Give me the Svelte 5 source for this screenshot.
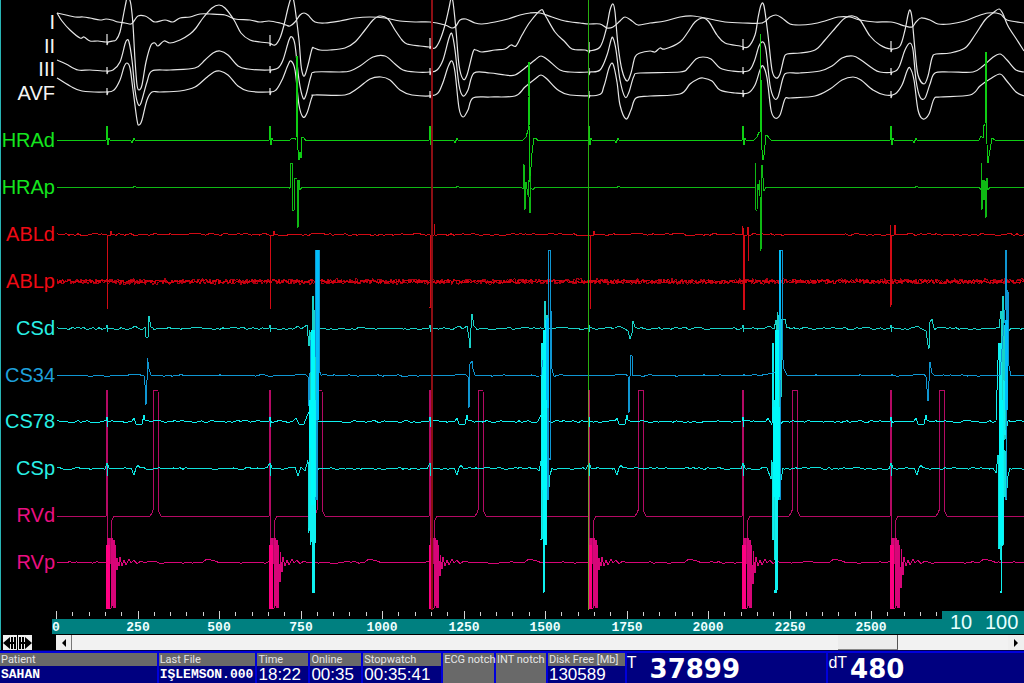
<script>
  let position = $state(766);

  const stims = [107, 270, 430, 589, 743, 891];
  const right = 1024;

  const labels = [
    { name: 'I', y: 29, color: '#f4f4f4' },
    { name: 'II', y: 53, color: '#f4f4f4' },
    { name: 'III', y: 76, color: '#f4f4f4' },
    { name: 'AVF', y: 100, color: '#f4f4f4' },
    { name: 'HRAd', y: 147, color: '#14e61e' },
    { name: 'HRAp', y: 194, color: '#14e61e' },
    { name: 'ABLd', y: 241, color: '#f00a14' },
    { name: 'ABLp', y: 288, color: '#f00a14' },
    { name: 'CSd', y: 335, color: '#28f0e6' },
    { name: 'CS34', y: 382, color: '#1ea0dc' },
    { name: 'CS78', y: 428, color: '#28f0e6' },
    { name: 'CSp', y: 475, color: '#28f0e6' },
    { name: 'RVd', y: 522, color: '#eb0f82' },
    { name: 'RVp', y: 569, color: '#eb0f82' }
  ];

  // surface leads
  const leads = [
    '57,13 66,15 75,17 83,17 90,18 100,20 106,19 112,20 118,22 125,23 131,24 134,21 138,16 145,16 150,19 155,22 165,20 173,22 180,18 190,17 200,14 210,14 225,15 235,19 250,20 260,22 269,21 280,23 286,25 290,26 295,22 300,15 304,13 308,15 315,22 325,23 340,21 355,18 370,17 385,18 400,21 415,22 430,22 445,25 452,28 456,26 460,20 466,19 475,23 482,24 495,22 508,19 520,15 530,13 540,13 552,17 565,21 580,23 589,24 600,24 607,28 613,27 620,21 625,17 632,21 638,25 650,23 665,21 680,17 693,16 710,19 725,22 743,23 762,23 770,17 776,15 782,18 790,24 800,25 812,24 825,21 838,17 850,17 860,20 875,22 891,22 905,26 912,27 916,22 921,18 930,20 938,24 950,24 965,21 975,17 988,13 1000,14 1007,20 1024,23',
    '57,13 62,21 70,30 80,38 84,37 90,41 98,41 106,42 113,41 116,40 120,32 124,12 126,2 127,-2 129,-2 131,5 133,25 135,60 137,85 139,90 142,85 146,62 151,45 155,43 158,46 164,41 170,43 180,40 190,34 196,28 203,18 212,8 219,5 225,8 234,20 241,33 250,40 260,42 269,43 275,45 280,38 284,25 288,8 291,-2 293,-2 295,8 299,40 301,65 303,75 305,75 308,65 312,49 314,48 320,50 330,50 345,48 355,42 365,30 373,20 380,16 388,19 395,30 402,40 407,44 420,46 429,47 435,48 440,40 445,25 449,8 451,-1 453,2 456,30 459,65 463,79 467,75 473,52 476,50 482,52 495,50 505,49 511,45 516,46 522,35 530,22 541,10 545,15 555,32 565,42 572,49 585,50 589,51 600,47 606,30 610,10 613,4 615,12 618,45 622,70 627,81 631,73 635,57 640,53 650,51 655,52 660,48 665,49 680,42 688,32 695,22 703,18 709,22 717,35 725,43 740,46 748,47 755,35 758,18 761,5 764,6 768,35 772,70 776,78 780,74 784,58 787,54 800,53 815,50 825,40 838,25 845,18 853,16 860,20 870,36 880,45 891,49 900,46 905,30 908,15 910,10 912,18 915,50 918,75 924,84 928,76 932,58 936,54 950,53 965,48 975,35 985,20 993,13 999,9 1003,14 1008,26 1017,40 1024,51',
    '57,60 66,64 78,70 90,70 106,71 113,70 120,62 125,44 127,40 129,42 132,60 135,90 138,104 141,103 147,82 152,71 170,70 195,68 205,60 213,53 220,51 228,55 238,66 248,69 269,70 278,68 283,60 289,40 292,37 295,45 299,80 303,98 306,95 311,76 315,72 340,72 350,71 360,66 373,57 385,56 395,64 403,70 415,72 430,72 437,70 443,60 449,38 452,34 455,50 459,85 463,96 468,90 474,73 490,73 505,75 515,75 525,68 535,60 541,56 548,60 560,70 570,72 589,72 600,70 607,55 611,40 613,38 616,50 620,80 625,97 629,92 634,76 640,73 680,72 688,68 696,59 703,57 711,59 720,68 732,71 748,71 754,62 759,46 763,42 766,50 770,85 774,98 778,97 783,78 787,73 800,73 820,71 832,66 842,58 853,56 861,60 872,68 880,72 893,72 899,67 905,50 910,43 913,50 916,80 920,97 925,98 930,84 935,73 950,72 973,72 983,66 992,58 1000,54 1007,60 1016,70 1024,72',
    '57,78 70,86 82,91 106,92 114,90 120,80 124,67 127,63 130,68 133,90 137,120 139,125 142,120 147,100 152,92 160,92 180,91 195,87 206,78 214,72 220,71 228,75 238,86 248,91 269,92 276,90 282,80 288,65 291,61 295,70 299,105 303,117 307,113 312,97 315,95 345,95 358,88 370,79 381,77 390,80 400,90 412,95 435,95 442,85 448,67 452,61 455,72 459,108 463,117 468,110 473,98 490,97 515,96 525,87 535,79 541,75 547,79 558,90 570,95 598,95 604,86 609,68 613,64 617,82 620,105 626,119 631,110 636,98 650,96 680,94 690,84 698,79 703,78 712,81 720,90 735,93 748,93 755,85 760,70 763,66 767,78 771,110 775,118 780,115 785,99 790,98 815,96 830,89 842,80 853,77 861,80 873,90 885,95 895,94 902,85 907,71 910,68 914,80 918,110 923,119 929,114 934,99 940,97 970,95 980,86 990,79 1000,74 1006,80 1016,92 1024,96'
  ];

  // pacing artefact on leads II, III and AVF
  const leadSpikes = [
    [42, 43, 46, 50, 47, 49],
    [71, 70, 72, 72, 71, 72],
    [92, 92, 95, 95, 94, 95]
  ];

  function parse(text) {
    return text.trim().split(/\s+/).map((p) => p.split(',').map(Number));
  }

  // Catmull-Rom through the points
  function smooth(text) {
    const p = parse(text);
    let d = `M${p[0]}`;
    for (let i = 0; i < p.length - 1; i++) {
      const a = p[i - 1] || p[i];
      const b = p[i];
      const c = p[i + 1];
      const e = p[i + 2] || c;
      d += `C${b[0] + (c[0] - a[0]) / 6},${b[1] + (c[1] - a[1]) / 6} ${c[0] - (e[0] - b[0]) / 6},${c[1] - (e[1] - b[1]) / 6} ${c}`;
    }
    return d;
  }

  function rng(seed) {
    return () => {
      seed = (seed * 16807) % 2147483647;
      return seed / 2147483647;
    };
  }

  // baseline with noise, interrupted by the runs of fixed points
  function trace(base, amp, step, runs, seed = 7) {
    const rand = rng(seed * 997);
    const sorted = runs.map(parse).sort((a, b) => a[0][0] - b[0][0]);
    const pts = [];
    let x = 57;
    const fill = (to) => {
      while (x < to) {
        pts.push([x, base + (rand() - 0.5) * 2 * amp]);
        x += step;
      }
    };
    for (const run of sorted) {
      fill(run[0][0]);
      pts.push(...run);
      x = run[run.length - 1][0] + 1;
    }
    fill(right + step);
    return 'M' + pts.map((p) => p.join(',')).join('L');
  }

  const shift = (text, dx, dy = 0) =>
    parse(text).map(([x, y]) => `${x + dx},${y + dy}`).join(' ');

  const at = (text, xs, dy = 0) => xs.map((x) => shift(text, x, dy));

  const hrad = trace(140.5, 0.3, 6, [
    ...at('-1,0 0,-14 0,4 1,5 2,-2 3,0', stims, 140),
    ...at('-4,0 -2,1 -1,3 1,-2 2,0', [133, 456, 617, 915], 140),
    '290,140 292,138 295,139 296,139 297,56 297,140 298,150 299,160 300,152 301,158 302,137 304,138 306,141',
    '523,140 526,137 528,130 528,97 529,62 529,125 530,182 532,153 534,138 536,138 538,141',
    '754,140 757,137 759,132 760,132 760,34 761,80 761,140 763,160 764,155 766,135 767,135 769,138 771,140',
    '979,140 981,136 983,138 984,125 985,125 986,52 986,125 988,163 990,150 992,138 995,140'
  ], 3);

  const hrap = trace(187.5, 0.3, 6, [
    ...at('-2,0 0,1 1,-1 3,0', [133, 456, 617, 915], 187),
    '289,187 290,189 291,163 292,163 292,210 294,210 294,178 297,179 298,228 299,180 300,190 302,187',
    '521,187 523,189 523,164 524,164 525,210 526,182 528,195 528,180 530,213 530,176 531,188 533,190 535,187',
    '753,187 755,188 755,163 756,210 757,210 758,184 759,190 759,180 760,196 761,251 762,165 764,191 766,187',
    '979,187 981,190 981,163 982,210 983,180 984,200 985,180 986,218 987,178 988,190 990,187'
  ], 5);

  const abld = trace(234.5, 1, 3, [
    ...at('0,0 0,74 0,0 3,1 4,-4 5,0', [107, 270, 590], 235),
    '430,235 430,308 431,235 434,235 434,224 435,235',
    '742,235 743,226 744,310 744,235 747,235 748,227 748,261 749,235',
    '890,235 890,225 891,307 892,235 894,235 895,225 896,235'
  ], 11);

  const ablp = trace(281.5, 3, 1, [], 13);
  const ablpCore = trace(281.5, 2, 1, [], 41);

  const blip = '-1,0 0,-3 0,4 1,0';
  const csd = trace(328.5, 1, 3, [
    ...at(blip, stims, 328),
    '132,328 135,326 138,328 142,330 145,327 146,337 148,338 149,316 151,327 153,328',
    '295,328 298,326 301,329 307,325 309,346 310,330 312,480 313,296 314,545 315,310 316,500 318,328',
    '455,328 459,326 463,329 467,326 469,338 470,348 471,328 472,314 474,326 476,328',
    '541,328 544,329 545,301 546,445 547,315 548,460 549,328',
    '615,328 619,326 625,329 628,331 630,339 632,333 633,321 635,327 637,328',
    '765,328 769,326 774,329 776,320 777,470 777,312 778,490 779,315 780,480 782,319 785,319 787,328',
    '913,328 917,326 922,329 926,331 928,345 929,349 930,322 932,319 934,328',
    '999,328 1001,311 1001,549 1003,296 1003,545 1004,325 1005,440 1007,320 1009,331 1011,328'
  ], 17);

  const cs34 = trace(375.5, 0.7, 4, [
    '131,375 137,374 144,376 145,385 146,405 147,380 147,358 148,362 149,369 151,375',
    '295,375 305,374 308,377 309,406 311,340 314,470 316,250 316,500 317,250 317,500 318,250 319,250 319,370 321,375',
    '455,375 465,374 468,377 469,408 470,364 472,361 473,369 475,375',
    '541,375 547,330 548,500 548,250 550,250 550,460 551,310 552,369 554,376',
    '615,375 625,374 628,376 629,413 630,376 631,355 632,356 633,376 635,375',
    '765,375 775,372 778,500 780,250 780,500 781,250 782,250 782,350 784,369 787,375',
    '913,375 924,374 926,377 928,401 930,362 932,373 934,375',
    '1000,375 1005,310 1005,250 1007,250 1006,500 1008,290 1009,366 1011,376'
  ], 19);

  const cs78 = trace(421.5, 1, 3, [
    ...at('-1,0 0,-4 0,6 1,0', stims, 421),
    ...at('0,0 2,-3 4,3 6,4 10,3 12,-6 13,-1 15,0', [132, 455, 615, 914], 421),
    '293,421 296,418 299,424 304,424 307,416 309,412 309,530 310,400 311,545 312,331 312,577 313,593 313,400 314,593 314,340 315,545 316,400 317,421',
    '538,421 541,415 541,343 541,540 543,343 543,592 544,592 544,370 545,546 546,320 546,545 548,421',
    '766,421 768,418 772,425 773,343 773,540 775,400 775,593 776,330 777,593 778,360 778,500 780,426 783,421',
    '996,421 998,360 999,343 999,549 1001,343 1001,593 1002,400 1003,546 1004,380 1005,435 1008,421'
  ], 23);

  const csp = trace(468.5, 1, 3, [
    ...at('0,-5 0,8 1,-3 2,0', stims, 468),
    ...at('0,0 3,7 5,0 7,-3 9,0', [131, 454, 614, 914], 468),
    '290,467 295,467 298,476 301,467 305,471 308,460 309,533 310,440 311,540 312,440 313,540 314,430 315,520 316,440 317,500 318,470',
    '536,468 539,471 541,461 542,540 543,440 544,560 545,440 546,545 547,420 548,500 550,475 552,468',
    '762,467 767,468 771,479 772,460 773,540 774,440 775,560 776,430 777,502 778,440 780,498 781,480 783,468',
    '993,468 996,473 998,455 999,548 1000,440 1001,560 1002,440 1003,545 1005,450 1006,500 1008,476 1010,468'
  ], 29);

  const pulses = [154, 318, 479, 639, 793, 940];
  const rvd = trace(516.5, 0.3, 10, [
    ...at('-1,516 -1,390 0,390 0,609 3,565 4,538 5,520 7,516', stims),
    ...at('-4,516 -1,512 0,390 4,390 5,512 7,516 9,517', pulses)
  ], 31);

  // height of the ringing after each stimulus
  const rings = [8, 20, 14, 8, 22, 26];
  const rvp = trace(562.5, 0.8, 4, [
    ...stims.map((x, i) =>
      shift(
        `0,562 0,538 0,608 1,538 1,608 2,538 2,608 4,608 4,538 5,608 6,538 7,608 7,540 8,608 8,545 10,${562 + rings[i]} 10,${562 - rings[i] / 2} 12,${562 + rings[i] / 2} 13,557 15,566 17,560 19,565 22,559 24,563 27,560 30,564 34,561 36,562`,
        x
      )
    ),
    ...at('0,562 4,559 8,560 12,561 17,563', [203, 365, 525, 685, 830, 980])
  ], 37);

  const channels = [
    { d: ablp, color: '#aa0010' },
    { d: ablpCore, color: '#d2000f' },
    { d: abld, color: '#d20a14' },
    { d: rvd, color: '#b40a64' },
    { d: rvp, color: '#d70578' },
    { d: csd, color: '#19d2c8' },
    { d: csp, color: '#0fe1dc' },
    { d: cs78, color: '#0ff0f0' },
    { d: cs34, color: '#0f96d2' },
    { d: hrad, color: '#0fcd14' },
    { d: hrap, color: '#0fb914' }
  ];

  // parts of the atrial signal where the strokes run together
  const cyan = '#00fafa';
  const blue = '#00befa';
  const dense = [
    { x: 316, y: 250, w: 3, h: 170, color: blue },
    { x: 309, y: 400, w: 6, h: 48, color: cyan },
    { x: 311, y: 330, w: 4, h: 175, color: cyan },
    { x: 546, y: 318, w: 3, h: 90, color: blue },
    { x: 542, y: 400, w: 5, h: 90, color: cyan },
    { x: 543, y: 330, w: 3, h: 215, color: cyan },
    { x: 779, y: 250, w: 2, h: 130, color: blue },
    { x: 773, y: 407, w: 7, h: 90, color: cyan },
    { x: 775, y: 330, w: 4, h: 170, color: cyan },
    { x: 1005, y: 320, w: 3, h: 90, color: blue },
    { x: 999, y: 400, w: 4, h: 145, color: cyan }
  ];

  // time axis, one minor tick every 50 ms
  const ticks = Array.from({ length: 55 }, (_, i) => i * 50);
  const timeX = (t) => Math.round(56 + t * 0.326);

  const fields = [
    { id: 'patient', title: 'Patient', value: 'SAHAN', mono: true },
    { id: 'file', title: 'Last File', value: 'IŞLEMSON.000', mono: true },
    { id: 'time', title: 'Time', value: '18:22' },
    { id: 'online', title: 'Online', value: '00:35' },
    { id: 'stopwatch', title: 'Stopwatch', value: '00:35:41' },
    { id: 'ecg', title: 'ECG notch', value: '' },
    { id: 'int', title: 'INT notch', value: '' },
    { id: 'disk', title: 'Disk Free [Mb]', value: '130589' }
  ];
</script>

<main>
  <svg class="chart" viewBox="0 0 1024 635">
    {#each leads as lead}
      <path class="lead" d={smooth(lead)} />
    {/each}
    {#each leadSpikes as ys, row}
      {#each ys as y, i}
        <path class="lead" d="M{stims[i]},{y - (row ? 4 : 8)}V{y + 3}l1,-3" />
      {/each}
    {/each}

    {#each channels as channel}
      <path class="trace" d={channel.d} stroke={channel.color} />
    {/each}
    {#each dense as part}
      <rect x={part.x} y={part.y} width={part.w} height={part.h} fill={part.color} />
    {/each}

    <!-- dense part of the RVp stimulus -->
    {#each stims as x}
      <rect x={x - 1} y="545" width="4" height="64" fill="#ff0082" />
    {/each}

    <path class="cursor" d="M432,0V610" stroke="#8c0f14" stroke-width="2" />
    <path class="cursor" d="M588.5,0V390" stroke="#28af0f" />
    <path class="cursor" d="M588.5,390V610" stroke="#78962d" />

    {#each labels as label}
      <text class="channel" x="55" y={label.y} fill={label.color}>{label.name}</text>
    {/each}

    <path class="cursor" d="M0.5,0V635" stroke="#28b4b4" />
    <rect x="52" y="619" width="972" height="15" fill="#008080" />
    <rect x="942" y="611" width="82" height="23" fill="#008080" />
    {#each ticks as t}
      {#if timeX(t) < 942}
        <path class="cursor" d="M{timeX(t) + 0.5},{t % 250 ? 612 : 611}V{t % 250 ? 616 : 619}" stroke="#d2d2d2" />
      {/if}
      {#if t % 250 === 0}
        <text class="time" x={timeX(t)} y="631">{t}</text>
      {/if}
    {/each}
    <text class="scale" x="950" y="629">10</text>
    <text class="scale" x="985" y="629">100</text>
  </svg>

  <div class="scroll">
    <button aria-label="Previous" class="jump">
      <svg width="14" height="14" viewBox="0 0 14 14">
        <path d="M0,7L7,1V6H8V1H10V6H11V1H13V13H11V8H10V13H8V8H7V13Z" />
      </svg>
    </button>
    <button aria-label="Next" class="jump">
      <svg width="14" height="14" viewBox="0 0 14 14">
        <path d="M14,7L7,1V6H6V1H4V6H3V1H1V13H3V8H4V13H6V8H7V13Z" />
      </svg>
    </button>
    <div class="bar">
      <button aria-label="Scroll left" class="arrow" onclick={() => (position = Math.max(0, position - 10))}>
        <svg width="8" height="8" viewBox="0 0 8 8"><path d="M6,0V8L2,4Z" /></svg>
      </button>
      <input aria-label="Scroll position" type="range" min="0" max="876" bind:value={position} />
      <button aria-label="Scroll right" class="arrow" onclick={() => (position = Math.min(876, position + 10))}>
        <svg width="8" height="8" viewBox="0 0 8 8"><path d="M2,0V8L6,4Z" /></svg>
      </button>
    </div>
  </div>

  <footer>
    {#each fields as field (field.id)}
      <div class="field" class:off={!field.value}>
        <span class="title">{field.title}</span>
        <span class="value" class:mono={field.mono}>{field.value}</span>
      </div>
    {/each}
    <div class="big">
      <span class="unit">T</span>
      <strong>37899</strong>
    </div>
    <div class="big delta">
      <span class="unit">dT</span>
      <strong>480</strong>
    </div>
  </footer>
</main>

<style>
  :global(body) {
    background: #000;
  }

  main {
    font-family: 'Liberation Sans', Arial, sans-serif;
    background: #000;
    color: #fff;
  }

  .chart {
    display: block;
    width: 100%;
  }

  .lead {
    fill: none;
    stroke: #e6e6e6;
    stroke-width: 1.2;
  }

  .trace {
    fill: none;
    stroke-width: 1;
    stroke-linejoin: bevel;
    shape-rendering: crispEdges;
  }

  .cursor {
    fill: none;
  }

  .channel {
    font-size: 20px;
    text-anchor: end;
  }

  .time {
    font: bold 13px 'Liberation Mono', monospace;
    text-anchor: middle;
    fill: #f0ffff;
  }

  .scale {
    font-size: 20px;
    fill: #e6ffff;
  }

  .scroll {
    display: flex;
    height: 15px;
    padding-left: 2px;
    border-left: 1px solid #28b4b4;
    box-sizing: border-box;
  }

  button {
    display: flex;
    align-items: center;
    justify-content: center;
    padding: 0;
    border: 0;
    background: #efefef;
  }

  .jump {
    width: 14px;
    margin-right: 1px;
  }

  .bar {
    display: flex;
    flex: 1;
    margin-left: 23px;
    background: #efefef;
  }

  .arrow {
    width: 16px;
    border-right: 1px solid #777;
  }

  .arrow:last-child {
    border-right: 0;
  }

  input {
    flex: 1;
    min-width: 0;
    margin: 0;
    appearance: none;
    background: #f2f2f2;
  }

  input::-webkit-slider-thumb {
    appearance: none;
    width: 60px;
    height: 15px;
    background: #ececec;
    border-right: 1px solid #555;
    border-bottom: 1px solid #888;
  }

  footer {
    display: grid;
    grid-template-columns: 157fr 97fr 51fr 51fr 78fr 51fr 50fr 77fr 200fr 196fr;
    gap: 2px;
    height: 33px;
    padding: 2px 0 1px;
    box-sizing: border-box;
    background: #0000dc;
    border-top: 1px solid #000050;
    overflow: hidden;
  }

  .field {
    display: flex;
    flex-direction: column;
    min-width: 0;
    background: #000080;
    white-space: nowrap;
  }

  .title {
    height: 13px;
    padding-left: 1px;
    font-family: Roboto, 'Liberation Sans', sans-serif;
    font-size: 11px;
    line-height: 13px;
    background: #696969;
    color: #e6e6e6;
  }

  .off {
    background: #696969;
  }

  .value {
    padding-left: 1px;
    font-size: 17px;
    line-height: 18px;
  }

  .mono {
    font: bold 13px/18px 'Liberation Mono', monospace;
  }

  .big {
    display: flex;
    gap: 13px;
    background: #000080;
  }

  .delta {
    gap: 3px;
  }

  .unit {
    font-size: 16px;
    line-height: 20px;
  }

  strong {
    font: bold 26px/33px 'DejaVu Sans', Verdana, sans-serif;
  }
</style>
